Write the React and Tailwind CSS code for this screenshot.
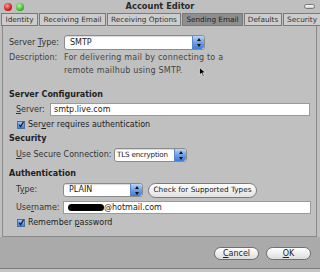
import React from "react";

const U = ({ children }) => <span className="underline underline-offset-1">{children}</span>;

function Arrow() {
  return (
    <div className="w-[12px] h-full shrink-0 rounded-r-[3px] border-l border-[#5a86c8] bg-gradient-to-b from-[#b9d4f6] via-[#6fa0e6] to-[#3c7bd8] flex flex-col items-center justify-center gap-[3px]">
      <svg width="4" height="3" viewBox="0 0 4 3"><path d="M2 0L4 3H0Z" fill="#111" /></svg>
      <svg width="4" height="3" viewBox="0 0 4 3"><path d="M0 0H4L2 3Z" fill="#111" /></svg>
    </div>
  );
}

function Select({ w, h, text, small }) {
  return (
    <div className={`${w} ${h} flex items-stretch bg-white border border-[#8b8b8b] rounded-[3px] shadow-[inset_0_1px_1px_rgba(0,0,0,0.15)] overflow-hidden`}>
      <div className={`flex-1 min-w-0 whitespace-nowrap flex items-center text-[#222] ${small ? "pl-[2px] text-[7.2px] tracking-[-0.2px]" : "pl-[5px]"}`}>{text}</div>
      <Arrow />
    </div>
  );
}

function Check({ label }) {
  return (
    <div className="flex items-center h-[9px] gap-[3px] whitespace-nowrap">
      <div className="w-[8px] h-[8px] bg-gradient-to-b from-[#9fc7f5] to-[#3d7fd6] border border-[#4a6ea0] flex items-center justify-center">
        <svg width="7" height="7" viewBox="0 0 7 7"><path d="M1 3.5L3 6L6.5 0.5" stroke="#0d1a33" strokeWidth="1.4" fill="none" /></svg>
      </div>
      <span className="text-[#222]">{label}</span>
    </div>
  );
}

function Tab({ w, children, active }) {
  return (
    <div
      className={`${w} h-[13px] shrink-0 whitespace-nowrap flex items-center justify-center border border-[#7a7a7a] text-[7.3px] ${
        active ? "bg-[#8e8e8e] text-[#222]" : "bg-[#cdcdcd] text-[#333]"
      }`}
    >
      {children}
    </div>
  );
}

export default function App() {
  return (
    <div
      className="w-[320px] h-[272px] bg-[#bfbfbf] flex flex-col text-[8px] leading-none text-[#333] overflow-hidden whitespace-nowrap"
      style={{ fontFamily: '"DejaVu Sans", "Liberation Sans", sans-serif' }}
    >
      {/* Title bar */}
      <div className="h-[13px] grid grid-cols-[1fr_auto_1fr] items-center px-[4px]">
        <div className="flex gap-[4px] items-center">
          <div className="w-[8px] h-[8px] rounded-full bg-[radial-gradient(circle_at_40%_35%,#ff9a9a,#d21a1a_60%,#8a0c0c)]" />
          <div className="w-[8px] h-[8px] rounded-full bg-[radial-gradient(circle_at_40%_35%,#b6f7a0,#3fbb2a_60%,#1f6f12)]" />
        </div>
        <div className="font-bold text-[#2a2a2a] text-[8.3px]">Account Editor</div>
        <div className="flex justify-end pr-[1px]">
          <div className="w-[11px] h-[5px] rounded-[3px] border border-[#777] bg-gradient-to-b from-white to-[#ccc]" />
        </div>
      </div>

      {/* Tabs */}
      <div className="flex pl-[1px] gap-[1px]">
        <Tab w="w-[37px]">Identity</Tab>
        <Tab w="w-[67px]">Receiving Email</Tab>
        <Tab w="w-[74px]">Receiving Options</Tab>
        <Tab w="w-[61px]" active>Sending Email</Tab>
        <Tab w="w-[38px]">Defaults</Tab>
        <Tab w="w-[38px]">Security</Tab>
      </div>

      {/* Panel */}
      <div className="mx-[2px] w-[315px] h-[211px] border border-t-0 border-[#8a8a8a] bg-[#c0c0c0] flex flex-col pl-[6px] pt-[9px]">
        <div className="flex items-center h-[15px]">
          <div className="w-[55px]">Server <U>T</U>ype:</div>
          <Select w="w-[141px]" h="h-[15px]" text="SMTP" />
        </div>
        <div className="flex mt-[2px]">
          <div className="w-[55px] leading-[11px] text-[#444]">Description:</div>
          <div className="leading-[11px] text-[#444] flex-1 tracking-[0.2px]">
            <div>For delivering mail by connecting to a</div>
            <div className="flex items-center">
              remote mailhub using SMTP.
              <svg className="ml-[16px] mt-[4px]" width="7" height="10" viewBox="0 0 7 10">
                <path d="M0.5 0.5V8L2.5 6L4 9.5L5.2 9L3.8 5.7H6.5Z" fill="#000" stroke="#fff" strokeWidth="0.6" />
              </svg>
            </div>
          </div>
        </div>

        <div className="mt-[13px] h-[10px] flex items-center font-bold text-[#222]">Server Configuration</div>
        <div className="mt-[3px] flex items-center h-[13px] pl-[7px]">
          <div className="w-[34px]"><U>S</U>erver:</div>
          <div className="w-[260px] h-[13px] bg-white border border-[#9a9a9a] flex items-center pl-[3px] text-[#222]">
            smtp.live.com
          </div>
        </div>
        <div className="mt-[4px] pl-[8px]">
          <Check label={<>Ser<U>v</U>er requires authentication</>} />
        </div>

        <div className="mt-[5px] h-[10px] flex items-center font-bold text-[#222]">Security</div>
        <div className="mt-[4px] flex items-center h-[14px] pl-[7px]">
          <div className="w-[98px]"><U>U</U>se Secure Connection:</div>
          <Select w="w-[73px]" h="h-[14px]" text="TLS encryption" small />
        </div>

        <div className="mt-[7px] h-[10px] flex items-center font-bold text-[#222]">Authentication</div>
        <div className="mt-[4px] flex items-center h-[14px] pl-[7px]">
          <div className="w-[47px]">T<U>y</U>pe:</div>
          <Select w="w-[80px]" h="h-[14px]" text="PLAIN" />
          <div className="ml-[5px] w-[109px] h-[15px] rounded-full border border-[#7a7a7a] bg-gradient-to-b from-white to-[#e2e2e2] flex items-center justify-center text-[#222] text-[7.3px]">
            Check for Supported Types
          </div>
        </div>
        <div className="mt-[4px] flex items-center h-[13px] pl-[7px]">
          <div className="w-[47px]">Use<U>r</U>name:</div>
          <div className="w-[248px] h-[13px] bg-white border border-[#9a9a9a] flex items-center pl-[4px] text-[#222]">
            <div className="w-[36px] h-[7px] rounded-full bg-black" />
            @hotmail.com
          </div>
        </div>
        <div className="mt-[4px] pl-[8px]">
          <Check label={<>Remember <U>p</U>assword</>} />
        </div>
      </div>

      {/* Bottom band */}
      <div className="flex-1 bg-[#aaaaaa] flex flex-col">
        <div className="flex justify-end gap-[7px] pr-[9px] pt-[10px]">
          <div className="w-[45px] h-[13px] rounded-full border border-[#6f6f6f] bg-gradient-to-b from-white to-[#dcdcdc] flex items-center justify-center text-[#222]">
            <U>C</U>ancel
          </div>
          <div className="w-[45px] h-[13px] rounded-full border border-[#6f6f6f] bg-gradient-to-b from-white to-[#dcdcdc] flex items-center justify-center text-[#222]">
            <U>O</U>K
          </div>
        </div>
        <div className="mt-auto h-[4px] border-t border-[#7a7a7a] bg-[#c4c4c4]" />
      </div>
    </div>
  );
}
